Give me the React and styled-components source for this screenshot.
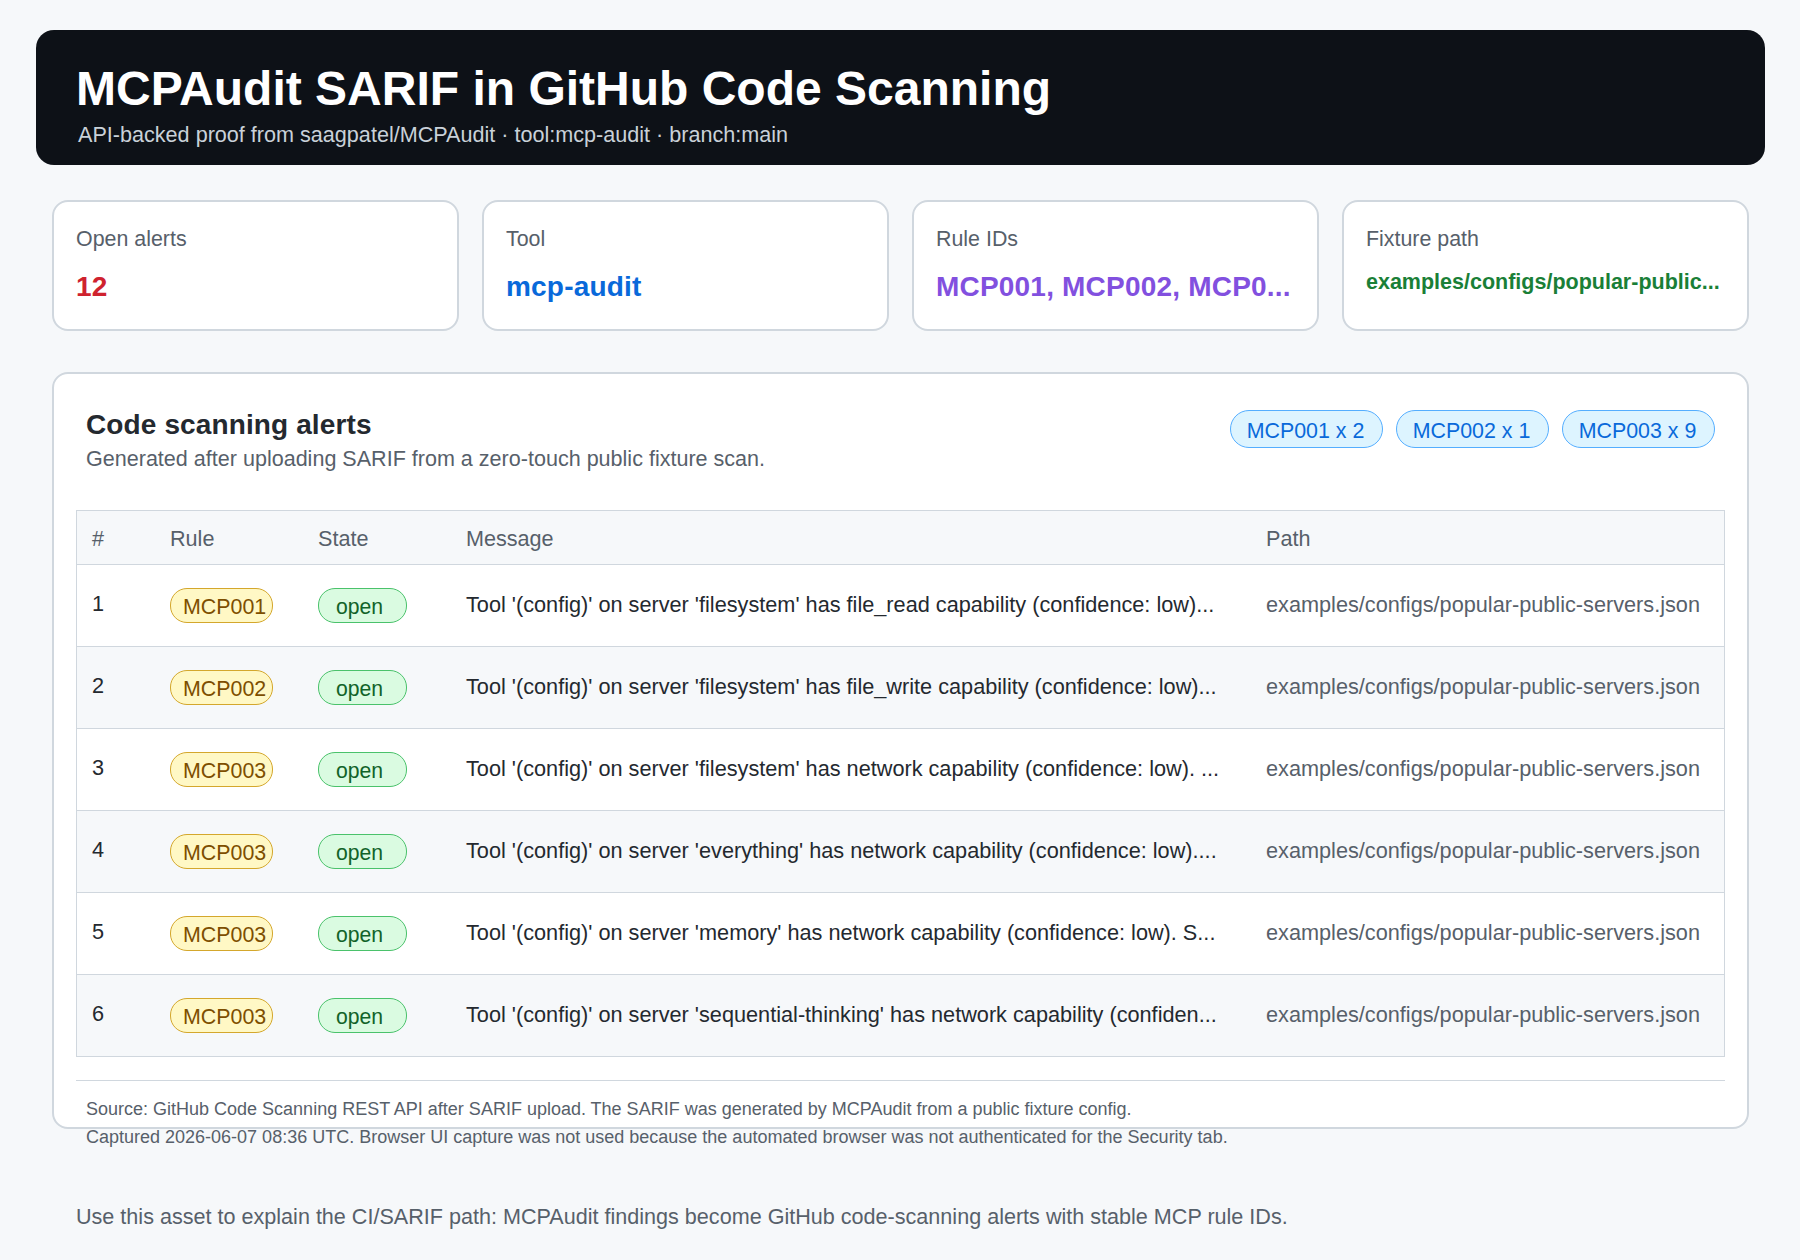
import styled, { createGlobalStyle } from 'styled-components';

const stats = [
  { label: 'Open alerts', value: '12', color: '#cf222e' },
  { label: 'Tool', value: 'mcp-audit', color: '#0969da' },
  { label: 'Rule IDs', value: 'MCP001, MCP002, MCP0...', color: '#8250df' },
  { label: 'Fixture path', value: 'examples/configs/popular-public...', color: '#1a7f37', small: true },
];

const counts = ['MCP001 x 2', 'MCP002 x 1', 'MCP003 x 9'];

const PATH = 'examples/configs/popular-public-servers.json';

const alerts = [
  { id: 1, rule: 'MCP001', message: "Tool '(config)' on server 'filesystem' has file_read capability (confidence: low)..." },
  { id: 2, rule: 'MCP002', message: "Tool '(config)' on server 'filesystem' has file_write capability (confidence: low)..." },
  { id: 3, rule: 'MCP003', message: "Tool '(config)' on server 'filesystem' has network capability (confidence: low). ..." },
  { id: 4, rule: 'MCP003', message: "Tool '(config)' on server 'everything' has network capability (confidence: low)...." },
  { id: 5, rule: 'MCP003', message: "Tool '(config)' on server 'memory' has network capability (confidence: low). S..." },
  { id: 6, rule: 'MCP003', message: "Tool '(config)' on server 'sequential-thinking' has network capability (confiden..." },
];

const App = () => {
  return (
    <Page>
      <GlobalStyle />
      <Hero>
        <HeroTitle>MCPAudit SARIF in GitHub Code Scanning</HeroTitle>
        <HeroSub>API-backed proof from saagpatel/MCPAudit · tool:mcp-audit · branch:main</HeroSub>
      </Hero>

      <Stats>
        {stats.map((s) => (
          <StatCard key={s.label}>
            <StatLabel>{s.label}</StatLabel>
            <StatValue $color={s.color} $small={s.small}>{s.value}</StatValue>
          </StatCard>
        ))}
      </Stats>

      <Panel>
        <PanelHead>
          <div>
            <PanelTitle>Code scanning alerts</PanelTitle>
            <PanelSub>Generated after uploading SARIF from a zero-touch public fixture scan.</PanelSub>
          </div>
          <Counts>
            {counts.map((c) => (
              <CountPill key={c}>{c}</CountPill>
            ))}
          </Counts>
        </PanelHead>

        <Table>
          <HeadRow>
            <span>#</span>
            <span>Rule</span>
            <span>State</span>
            <span>Message</span>
            <span>Path</span>
          </HeadRow>
          {alerts.map((a) => (
            <Row key={a.id} $striped={a.id % 2 === 0}>
              <RowNumber>{a.id}</RowNumber>
              <span><RulePill>{a.rule}</RulePill></span>
              <span><StatePill>open</StatePill></span>
              <Message>{a.message}</Message>
              <PathText>{PATH}</PathText>
            </Row>
          ))}
        </Table>

        <Source>
          <p>Source: GitHub Code Scanning REST API after SARIF upload. The SARIF was generated by MCPAudit from a public fixture config.</p>
          <p>Captured 2026-06-07 08:36 UTC. Browser UI capture was not used because the automated browser was not authenticated for the Security tab.</p>
        </Source>
      </Panel>

      <Note>Use this asset to explain the CI/SARIF path: MCPAudit findings become GitHub code-scanning alerts with stable MCP rule IDs.</Note>
    </Page>
  );
};

export default App;

const GlobalStyle = createGlobalStyle`
  html, body {
    margin: 0;
    background: #f6f8fa;
  }
  body {
    font-family: "Liberation Sans", Arial, sans-serif;
    color: #24292f;
  }
  * {
    box-sizing: border-box;
  }
`;

const Page = styled.main`
  width: 1800px;
  height: 1260px;
  padding: 30px 35px 0 36px;
`;

const Hero = styled.header`
  height: 135px;
  padding: 31px 40px 0;
  border-radius: 18px;
  background: #0d1117;
`;

const HeroTitle = styled.h1`
  margin: 0;
  font-size: 48px;
  line-height: 56px;
  font-weight: 700;
  color: #ffffff;
`;

const HeroSub = styled.div`
  margin: 5px 0 0 2px;
  font-size: 21.6px;
  line-height: 26px;
  color: #c9d1d9;
`;

const Stats = styled.section`
  display: grid;
  grid-template-columns: repeat(4, 407px);
  gap: 23px;
  margin: 35px 16px 0;
`;

const StatCard = styled.div`
  height: 131px;
  padding: 24px 22px 0;
  border: 2px solid #d0d7de;
  border-radius: 16px;
  background: #ffffff;
  overflow: hidden;
`;

const StatLabel = styled.div`
  font-size: 21.4px;
  line-height: 26px;
  color: #57606a;
`;

const StatValue = styled.div`
  margin-top: ${({ $small }) => ($small ? '16px' : '18px')};
  font-size: ${({ $small }) => ($small ? '21.5px' : '28px')};
  line-height: ${({ $small }) => ($small ? '28px' : '34px')};
  letter-spacing: ${({ $small }) => ($small ? '0' : '0.2px')};
  font-weight: 700;
  white-space: nowrap;
  color: ${({ $color }) => $color};
`;

const Panel = styled.section`
  height: 757px;
  margin: 41px 16px 0;
  padding: 0 22px;
  border: 2px solid #d0d7de;
  border-radius: 16px;
  background: #ffffff;
`;

const PanelHead = styled.div`
  display: flex;
  justify-content: space-between;
  align-items: flex-start;
  height: 136px;
  padding: 34px 10px 0 10px;
`;

const PanelTitle = styled.h2`
  margin: 0;
  font-size: 28px;
  line-height: 34px;
  letter-spacing: 0.12px;
  font-weight: 700;
`;

const PanelSub = styled.div`
  margin-top: 4px;
  font-size: 21.55px;
  line-height: 26px;
  color: #57606a;
`;

const Counts = styled.div`
  display: flex;
  gap: 13px;
  margin-top: 2px;
`;

const CountPill = styled.span`
  width: 153px;
  height: 38px;
  padding-right: 2px;
  border: 1px solid #54aeff;
  border-radius: 19px;
  background: #ddf4ff;
  color: #0969da;
  font-size: 21.4px;
  line-height: 40px;
  text-align: center;
`;

const Table = styled.div`
  border: 1px solid #d0d7de;
`;

const columns = '78px 148px 148px 800px 1fr';

const HeadRow = styled.div`
  display: grid;
  grid-template-columns: ${columns};
  align-items: center;
  height: 54px;
  padding: 2px 0 0 15px;
  background: #f6f8fa;
  border-bottom: 1px solid #d0d7de;
  font-size: 21.6px;
  color: #57606a;
`;

const Row = styled.div`
  display: grid;
  grid-template-columns: ${columns};
  align-items: center;
  height: 82px;
  padding-left: 15px;
  background: ${({ $striped }) => ($striped ? '#f6f8fa' : '#ffffff')};
  border-bottom: 1px solid #d0d7de;
  font-size: 21.7px;

  &:last-child {
    height: 81px;
    border-bottom: 0;
  }
`;

const RowNumber = styled.span`
  margin-top: -4px;
`;

const RulePill = styled.span`
  display: block;
  width: 103px;
  height: 35px;
  padding-left: 12px;
  border: 1px solid #d4a72c;
  border-radius: 17px;
  background: #fff8c5;
  color: #7d4e00;
  font-size: 21.4px;
  line-height: 36px;
  white-space: nowrap;
`;

const StatePill = styled.span`
  display: block;
  width: 89px;
  height: 35px;
  padding-left: 17px;
  border: 1px solid #4ac26b;
  border-radius: 17px;
  background: #dafbe1;
  color: #116329;
  font-size: 21.2px;
  line-height: 36px;
`;

const Message = styled.span`
  margin-top: -2px;
  white-space: nowrap;
`;

const PathText = styled.span`
  margin-top: -2px;
  color: #57606a;
  white-space: nowrap;
`;

const Source = styled.div`
  margin-top: 23px;
  padding: 14px 10px 0;
  border-top: 1px solid #d0d7de;
  font-size: 18px;
  line-height: 28px;
  color: #57606a;

  p {
    margin: 0;
    white-space: nowrap;
  }
`;

const Note = styled.p`
  margin: 74px 0 0 40px;
  font-size: 21.58px;
  line-height: 28px;
  color: #57606a;
`;
